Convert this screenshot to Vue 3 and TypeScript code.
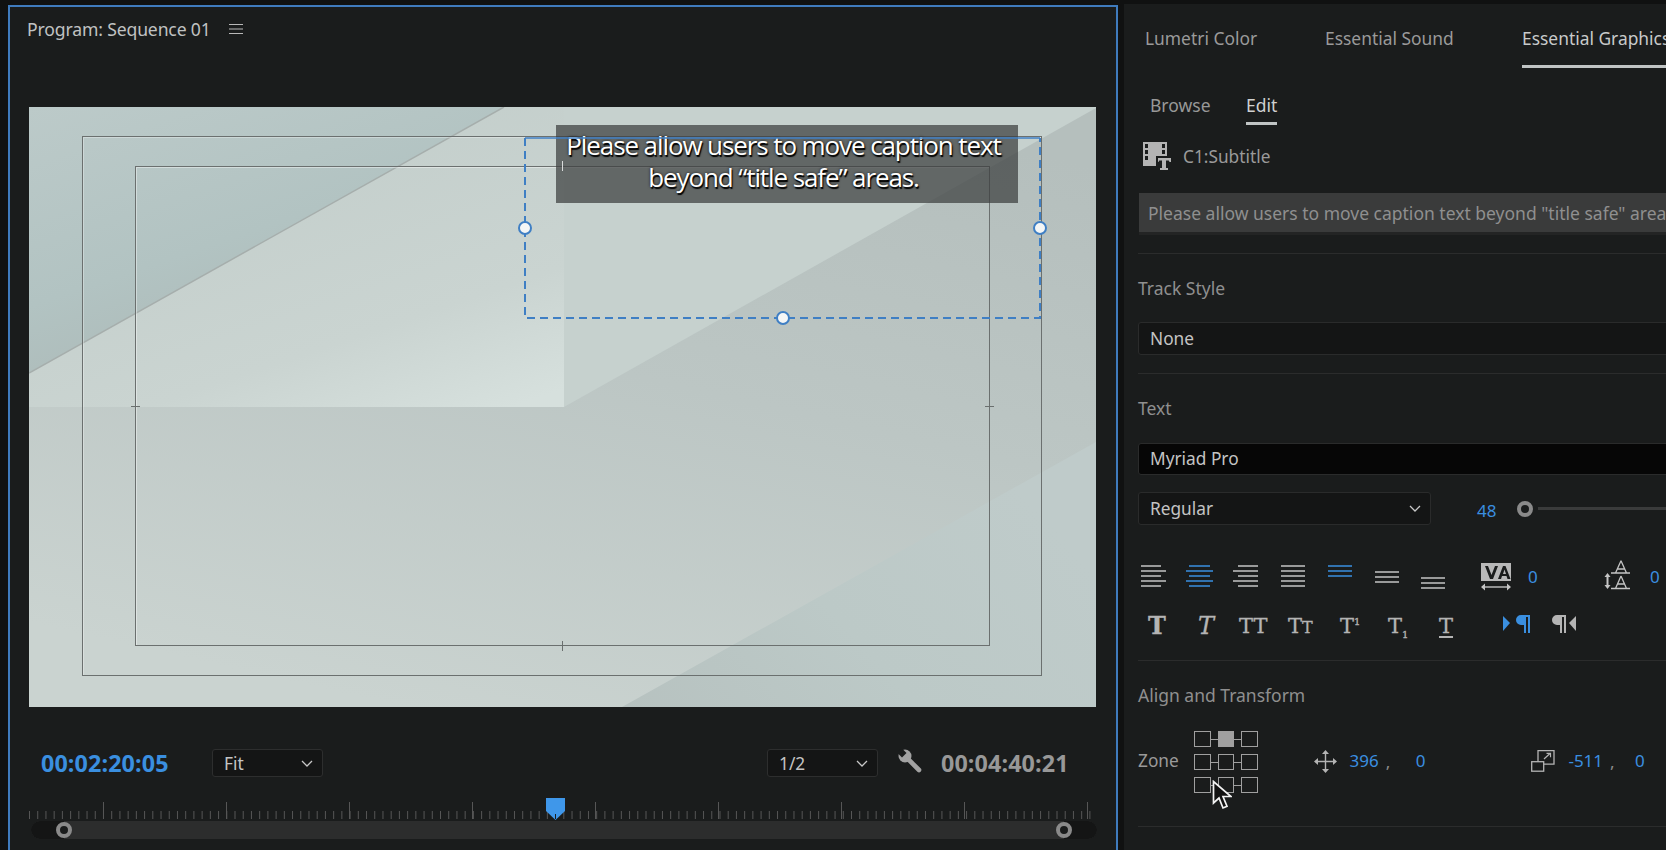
<script setup lang="ts">
const smallTicks = Array.from({ length: 130 }, (_, i) => 29 + i * 8.22);
const majorTicks = [103, 226, 349, 472, 595, 718, 841, 964, 1087];
const zoneRows = [0, 1, 2];
const zoneCols = [0, 1, 2];
</script>

<template>
  <div class="app">
    <section class="program">
      <header class="program-head">
        <span class="program-title">Program: Sequence 01</span>
        <svg class="menu" width="14" height="12" viewBox="0 0 14 12">
          <path d="M0 1.500h14M0 6h14M0 10.500h14" stroke="#b8b8b8" stroke-width="1.200" />
        </svg>
      </header>

      <div class="video">
        <svg class="video-bg" width="1067" height="600" viewBox="0 0 1067 600" preserveAspectRatio="none">
          <defs>
            <linearGradient id="darkface" x1="0" y1="0" x2="0.6" y2="1">
              <stop offset="0" stop-color="#bccac9" />
              <stop offset="0.55" stop-color="#b2c3c2" />
              <stop offset="1" stop-color="#abb7b5" />
            </linearGradient>
            <linearGradient id="lightface" x1="0.3" y1="0" x2="0.9" y2="1">
              <stop offset="0" stop-color="#c2cdca" />
              <stop offset="0.7" stop-color="#cad4d1" />
              <stop offset="1" stop-color="#d6e0dd" />
            </linearGradient>
            <linearGradient id="floor" x1="0.75" y1="0" x2="0.35" y2="1">
              <stop offset="0" stop-color="#b5bfbd" />
              <stop offset="0.45" stop-color="#bcc6c4" />
              <stop offset="1" stop-color="#cad3d0" />
            </linearGradient>
            <linearGradient id="band" x1="0" y1="1" x2="1" y2="0.5">
              <stop offset="0" stop-color="#b7c2c0" />
              <stop offset="0.5" stop-color="#bcc9c7" />
              <stop offset="1" stop-color="#bfcbca" />
            </linearGradient>
          </defs>
          <rect width="1067" height="600" fill="url(#floor)" />
          <polygon points="535,0 1067,0 1067,1 535,300" fill="#c6d1ce" />
          <polygon points="0,0 475,0 0,266" fill="url(#darkface)" />
          <polygon points="475,0 535,0 535,300 0,300 0,266" fill="url(#lightface)" />
          <polygon points="1067,335 1067,600 593,600" fill="url(#band)" />
          <path d="M0 266 475 0" stroke="#a6aeac" stroke-width="1.500" fill="none" />
        </svg>

        <div class="safe safe-outer"></div>
        <div class="safe safe-inner"></div>
        <i class="cross cross-l"></i>
        <i class="cross cross-r"></i>
        <i class="cross cross-b"></i>
        <i class="cross cross-t"></i>

        <div class="caption">
          <p>Please allow users to move caption text</p>
          <p>beyond “title safe” areas.</p>
        </div>
        <svg class="select-box" width="520" height="184" viewBox="0 0 520 184">
          <path d="M1 1H516" stroke="#3f7fc4" stroke-width="1.500" fill="none" />
          <path d="M1 1V181H516V1" stroke="#3f7fc4" stroke-width="2" stroke-dasharray="8 5" fill="none" />
        </svg>
        <i class="handle handle-l"></i>
        <i class="handle handle-r"></i>
        <i class="handle handle-b"></i>
      </div>

      <div class="controls">
        <span class="tc tc-now">00:02:20:05</span>
        <div class="dd dd-fit"><span>Fit</span>
          <svg width="12" height="7" viewBox="0 0 12 7"><path d="M1 1l5 5 5-5" fill="none" stroke="#c8c8c8" stroke-width="1.300" /></svg>
        </div>
        <div class="dd dd-res"><span>1/2</span>
          <svg width="12" height="7" viewBox="0 0 12 7"><path d="M1 1l5 5 5-5" fill="none" stroke="#c8c8c8" stroke-width="1.300" /></svg>
        </div>
        <svg class="wrench" width="24" height="24" viewBox="0 0 24 24">
          <circle cx="7" cy="7" r="6.500" fill="#a2a2a2" />
          <path d="M8 8L21 21" stroke="#a2a2a2" stroke-width="4.600" stroke-linecap="round" />
          <polygon points="-1,3.500 3.500,-1 8.500,4 4,8.500" fill="#1a1c1c" />
        </svg>
        <span class="tc tc-end">00:04:40:21</span>
      </div>

      <div class="timeline">
        <svg class="ruler" width="1106" height="22" viewBox="10 0 1106 22">
          <rect v-for="t in smallTicks" :key="t" :x="t" y="13" width="1" height="8" fill="#565656" />
          <rect v-for="t in majorTicks" :key="'m' + t" :x="t" y="4" width="1" height="17" fill="#565656" />
          <path d="M546 0h19v13l-9.500 9-9.500-9z" fill="#3f97ea" />
          <path d="M555 21v-5h1v5z" fill="#1a1c1c" />
        </svg>
        <div class="scroll">
          <i class="scroll-end"></i>
          <i class="scroll-knob"></i>
          <i class="scroll-mid"></i>
          <i class="scroll-knob"></i>
          <i class="scroll-end"></i>
        </div>
      </div>
    </section>

    <aside class="panel">
      <nav class="tabs">
        <span class="tab">Lumetri Color</span>
        <span class="tab">Essential Sound</span>
        <span class="tab tab-on">Essential Graphics</span>
      </nav>
      <nav class="subtabs">
        <span class="subtab">Browse</span>
        <span class="subtab subtab-on">Edit</span>
      </nav>
      <div class="track">
        <svg width="29" height="29" viewBox="0 0 29 29">
          <path d="M0 0h24v20H16v4H0z" fill="#b4b4b4" />
          <g fill="#1a1c1c">
            <rect x="2" y="2" width="3" height="4" /><rect x="2" y="8" width="3" height="4" /><rect x="2" y="14" width="3" height="4" />
            <rect x="19" y="2" width="3" height="4" /><rect x="19" y="8" width="3" height="4" />
            <rect x="13" y="14" width="16" height="15" />
          </g>
          <path d="M15 16h13v4h-1.500l-.7-1.500H23V26h2v2h-8v-2h2v-7.500h-2.800L15.500 20H15z" fill="#b4b4b4" />
        </svg>
        <span>C1:Subtitle</span>
      </div>
      <div class="caption-input">Please allow users to move caption text beyond "title safe" areas.</div>
      <hr class="rule rule-a" />
      <div class="heading h-track">Track Style</div>
      <div class="field field-none">None</div>
      <hr class="rule rule-b" />
      <div class="heading h-text">Text</div>
      <div class="field field-font">Myriad Pro</div>
      <div class="style-row">
        <div class="field field-style"><span>Regular</span>
          <svg width="12" height="7" viewBox="0 0 12 7"><path d="M1 1l5 5 5-5" fill="none" stroke="#c8c8c8" stroke-width="1.300" /></svg>
        </div>
        <span class="num size">48</span>
        <i class="knob"></i>
        <i class="slide"></i>
      </div>

      <div class="icons-a">
        <svg width="25" height="24" viewBox="0 0 25 24"><path d="M0 1h20M0 6h25M0 11h20M0 16h25M0 21h20" stroke="#c4c4c4" stroke-width="1.400" /></svg>
        <svg width="27" height="24" viewBox="0 0 27 24"><path d="M3 1h21M0 6h27M3 11h21M0 16h27M3 21h21" stroke="#3a8fe0" stroke-width="1.400" /></svg>
        <svg width="25" height="24" viewBox="0 0 25 24"><path d="M5 1h20M0 6h25M5 11h20M0 16h25M5 21h20" stroke="#c4c4c4" stroke-width="1.400" /></svg>
        <svg width="24" height="24" viewBox="0 0 24 24"><path d="M0 1h24M0 6h24M0 11h24M0 16h24M0 21h24" stroke="#c4c4c4" stroke-width="1.400" /></svg>
        <svg width="24" height="24" viewBox="0 0 24 24"><path d="M0 1h24M0 6h24M0 11h24" stroke="#3a8fe0" stroke-width="1.400" /></svg>
        <svg width="24" height="24" viewBox="0 0 24 24"><path d="M0 7h24M0 12h24M0 17h24" stroke="#c4c4c4" stroke-width="1.400" /></svg>
        <svg width="24" height="24" viewBox="0 0 24 24"><path d="M0 13h24M0 18h24M0 23h24" stroke="#c4c4c4" stroke-width="1.400" /></svg>
        <svg class="i-va" width="30" height="29" viewBox="0 0 30 29">
          <rect width="30" height="18" fill="#b8b8b8" />
          <path d="M4 3h3l3.500 9L14 3h3l-5 13H9zM17 16l5-13h2.500l5 13h-3l-1-3h-4.500l-1 3zM22 11h3l-1.500-4.500z" fill="#1a1c1c" />
          <path d="M3 24h24" stroke="#c4c4c4" stroke-width="1.400" />
          <path d="M0 24l4-3.500v7zM30 24l-4-3.500v7z" fill="#c4c4c4" />
        </svg>
        <span class="num n-va">0</span>
        <svg class="i-lead" width="26" height="30" viewBox="0 0 26 30">
          <path d="M7 13h19M7 28.500h19M17 .8L11.500 13M17 .8L22.500 13M13.500 9h7M17 16L11.500 28.500M17 16l5.500 12.500M13.500 24h7" fill="none" stroke="#c4c4c4" stroke-width="1.300" />
          <path d="M3.500 13l3 4H4.500v8h2l-3 4-3-4h2v-8h-2z" fill="#c4c4c4" />
        </svg>
        <span class="num n-lead">0</span>
      </div>

      <div class="icons-b">
        <span class="t t-bold">T</span>
        <span class="t t-ital">T</span>
        <span class="t t-caps">TT</span>
        <span class="t t-small">T<small>T</small></span>
        <span class="t t-sup">T<sup>1</sup></span>
        <span class="t t-sub">T<sub>1</sub></span>
        <span class="t t-und">T</span>
        <svg class="para p-ltr" width="27" height="20" viewBox="0 0 27 20">
          <path d="M0 2l7 7-7 8z" fill="#3a8fe0" />
          <path d="M18 1h9v18h-2V3h-2v16h-2v-8h-3a5 5 0 0 1 0-10z" fill="#3a8fe0" />
        </svg>
        <svg class="para p-rtl" width="27" height="20" viewBox="0 0 27 20">
          <path d="M8 1h9v18h-2V3h-2v16h-2v-8H8a5 5 0 0 1 0-10z" fill="#b4b4b4" />
          <path d="M27 2l-7 7 7 8z" fill="#b4b4b4" />
        </svg>
      </div>
      <hr class="rule rule-c" />
      <div class="heading h-align">Align and Transform</div>
      <div class="zone-row">
        <span class="zone-label">Zone</span>
        <div class="zone">
          <div v-for="r in zoneRows" :key="r" class="zone-line">
            <i v-for="c in zoneCols" :key="c" class="cell" :class="{ 'cell-on': r === 0 && c === 1 }"></i>
          </div>
          <svg class="cursor" width="20" height="30" viewBox="0 0 20 30">
            <path d="M1.500 1.500V23l5.500-5 4 10 4-1.700-4-9.800H19z" fill="#111" stroke="#f2f2f2" stroke-width="1.700" stroke-linejoin="miter" />
          </svg>
        </div>
        <svg class="i-move" width="23" height="23" viewBox="0 0 23 23">
          <path d="M11.500 3v17M3 11.500h17" stroke="#b4b4b4" stroke-width="1.400" />
          <path d="M11.500 0l3.500 4H8zM11.500 23L8 19h7zM0 11.500L4 8v7zM23 11.500L19 15V8z" fill="#b4b4b4" />
        </svg>
        <span class="num n-x1">396</span><span class="comma">,</span><span class="num n-y1">0</span>
        <svg class="i-scale" width="24" height="22" viewBox="0 0 24 22">
          <rect x=".7" y="11.700" width="12" height="9.500" fill="none" stroke="#b4b4b4" stroke-width="1.300" />
          <path d="M7 11.700V.7h16v13.500H12.700" fill="none" stroke="#b4b4b4" stroke-width="1.300" />
          <path d="M13 9l6-5.500M15.500 3.300h4v4" fill="none" stroke="#b4b4b4" stroke-width="1.200" />
        </svg>
        <span class="num n-x2">-511</span><span class="comma comma-b">,</span><span class="num n-y2">0</span>
      </div>
      <hr class="rule rule-d" />
    </aside>
  </div>
</template>

<style>
html, body { margin: 0; background: #0f1010; overflow: hidden; }
</style>

<style scoped>
.app {
  width: 1666px;
  height: 850px;
  display: flex;
  overflow: hidden;
  background: #101111;
  font-family: "Noto Sans", "Open Sans", sans-serif;
  color: #a8a8a8;
}
.program {
  width: 1110px;
  height: 860px;
  margin: 5px 0 0 8px;
  border: 2px solid #3f7bbd;
  box-sizing: border-box;
  background: #1a1c1c;
  flex: none;
  display: flex;
  flex-direction: column;
}
.program-head {
  height: 100px;
  box-sizing: border-box;
  padding: 10px 0 0 17px;
  display: flex;
  align-items: flex-start;
  gap: 18px;
}
.program-title { font-size: 17.600px; line-height: 24px; color: #c0c2c2; letter-spacing: -0.15px; }
.menu { margin-top: 6px; }

.video {
  position: relative;
  width: 1067px;
  height: 600px;
  margin-left: 19px;
  flex: none;
}
.video-bg { position: absolute; inset: 0; display: block; }
.safe { position: absolute; box-sizing: border-box; border: 1px solid #6b706f; }
.safe-outer { left: 53px; top: 29px; width: 960px; height: 540px; box-shadow: inset 1px 1px 0 rgba(255,255,255,.3); }
.safe-inner { left: 106px; top: 59px; width: 855px; height: 480px; box-shadow: inset 1px 1px 0 rgba(255,255,255,.4); }
.cross { position: absolute; background: #6a6f6e; }
.cross-l { left: 102px; top: 299px; width: 9px; height: 1px; }
.cross-r { left: 956px; top: 299px; width: 9px; height: 1px; }
.cross-b { left: 533px; top: 534px; width: 1px; height: 10px; }
.cross-t { left: 533px; top: 54px; width: 1px; height: 10px; z-index: 2; background: #d8dada; }

.caption {
  position: absolute;
  left: 527px;
  top: 18px;
  width: 462px;
  height: 78px;
  background: rgba(60, 62, 62, .72);
  box-sizing: border-box;
  padding: 4px 7px 0 0;
  text-align: center;
  color: #fff;
  font-family: "Open Sans", sans-serif;
  font-size: 26px;
  line-height: 32px;
  letter-spacing: -1.100px;
  text-shadow: 1px 2px 1px #000, 0 0 3px rgba(0,0,0,.75);
}
.caption p { margin: 0; white-space: nowrap; }
.select-box { position: absolute; left: 495px; top: 30px; display: block; overflow: visible; }
.handle {
  position: absolute;
  width: 14px;
  height: 14px;
  box-sizing: border-box;
  border: 2px solid #3f7fc4;
  border-radius: 50%;
  background: #f4f6f6;
}
.handle-l { left: 489px; top: 114px; }
.handle-r { left: 1004px; top: 114px; }
.handle-b { left: 747px; top: 204px; }

.controls {
  height: 95px;
  box-sizing: border-box;
  padding: 42px 0 0 31px;
  display: flex;
  align-items: flex-start;
}
.tc { font-size: 23.300px; line-height: 28px; font-weight: 700; font-family: "Open Sans", sans-serif; letter-spacing: .1px; }
.tc-now { color: #3a8fe0; width: 171px; flex: none; }
.tc-end { color: #989898; margin-left: 19px; margin-top: 0; }
.dd {
  height: 28px;
  box-sizing: border-box;
  background: #141515;
  border: 1px solid #2d2e2e;
  border-radius: 3px;
  display: flex;
  align-items: center;
  justify-content: space-between;
  padding: 0 9px 0 11px;
  font-size: 17.300px;
  color: #c4c4c4;
  flex: none;
}
.dd-fit { width: 111px; }
.dd-res { width: 111px; margin-left: 444px; }
.wrench { margin: 0 0 0 20px; flex: none; }

.timeline { display: flex; flex-direction: column; }
.ruler { display: block; margin-top: -4px; }
.scroll {
  margin: 1px 0 0 21px;
  width: 1066px;
  height: 18px;
  display: flex;
  align-items: center;
  background: #2c2d2d;
  border-radius: 9px;
}
.scroll-end { width: 33px; height: 18px; background: #141515; border-radius: 9px 0 0 9px; flex: none; }
.scroll-end:last-child { border-radius: 0 9px 9px 0; }
.scroll-mid { flex: 1; }
.scroll-knob {
  width: 16px;
  height: 16px;
  box-sizing: border-box;
  border: 4px solid #8a8a8a;
  border-radius: 50%;
  background: #1a1c1c;
  flex: none;
  margin: 0 -8px;
  position: relative;
}

.panel {
  flex: 1;
  min-width: 0;
  position: relative;
  margin: 4px 0 0 6px;
  padding-left: 13px;
  box-sizing: border-box;
  overflow: hidden;
  display: flex;
  flex-direction: column;
  background: #1a1c1c;
}
.tabs { display: flex; height: 64px; flex: none; }
.tab { font-size: 17.400px; padding-top: 21px; line-height: 26px; color: #9a9a9a; box-sizing: border-box; white-space: nowrap; flex: none; }
.tab:nth-child(1) { margin-left: 8px; width: 180px; }
.tab:nth-child(2) { width: 197px; }
.tab-on { color: #c8caca; flex: 1; border-bottom: 3px solid #c0c4c4; }
.subtabs { display: flex; height: 57px; padding-left: 13px; box-sizing: border-box; flex: none; }
.subtab { font-size: 17.500px; line-height: 26px; padding-top: 24px; height: 57px; box-sizing: border-box; color: #989898; }
.subtab:first-child { width: 96px; }
.subtab-on { color: #cfd0d0; position: relative; }
.subtab-on::after { content: ""; position: absolute; left: 0; right: 0; top: 54px; height: 3px; background: #c0c4c4; }
.track { display: flex; align-items: center; height: 36px; margin-top: 13px; gap: 11px; padding-left: 6px; flex: none; font-size: 17.300px; color: #9a9a9a; }
.caption-input {
  margin: 19px 0 0 2px;
  height: 39px;
  background: #3a3b3b;
  color: #8f8f8f;
  font-size: 17.500px;
  line-height: 41px;
  padding-left: 9px;
  white-space: nowrap;
  flex: none;
  width: 560px;
  box-shadow: 0 3px 0 #232424;
}
.rule { margin: 0 0 0 1px; border: 0; height: 1px; background: #2b2c2c; flex: none; width: 540px; }
.rule-a { margin-top: 21px; }
.heading { font-size: 17.500px; line-height: 24px; color: #8f8f8f; padding-left: 1px; flex: none; }
.h-track { margin-top: 22px; }
.field { margin-left: 1px; box-sizing: border-box; font-size: 17.300px; color: #c4c4c4; border: 1px solid #2a2b2b; border-radius: 3px; flex: none; padding-left: 11px; }
.field-none { margin-top: 22px; width: 540px; height: 33px; line-height: 32px; background: #141515; }
.rule-b { margin-top: 18px; }
.h-text { margin-top: 22px; }
.field-font { margin-top: 23px; width: 540px; height: 32px; line-height: 29px; background: #060606; }
.style-row { display: flex; align-items: center; margin-top: 17px; height: 33px; flex: none; position: relative; }
.field-style { width: 293px; height: 33px; background: #141515; display: flex; align-items: center; justify-content: space-between; padding-right: 9px; }
.num { color: #3a8fe0; font-size: 17px; line-height: 22px; flex: none; }
.size { margin-left: 46px; margin-top: 4px; }
.knob { width: 16px; height: 16px; box-sizing: border-box; border: 4px solid #8a8a8a; border-radius: 50%; margin-left: 21px; flex: none; }
.slide { width: 200px; height: 3px; background: #3a3b3b; margin-left: 5px; flex: none; }

.icons-a { position: relative; height: 30px; margin-top: 35px; flex: none; }
.icons-a > * { position: absolute; top: 5px; }
.icons-a > :nth-child(1) { left: 4px; }
.icons-a > :nth-child(2) { left: 49px; }
.icons-a > :nth-child(3) { left: 96px; }
.icons-a > :nth-child(4) { left: 144px; }
.icons-a > :nth-child(5) { left: 191px; }
.icons-a > :nth-child(6) { left: 238px; }
.icons-a > :nth-child(7) { left: 284px; }
.icons-a .i-va { left: 344px; top: 3px; }
.icons-a .n-va { left: 391px; top: 6px; }
.icons-a .i-lead { left: 467px; top: 0; }
.icons-a .n-lead { left: 513px; top: 6px; }

.icons-b { position: relative; height: 30px; margin-top: 21px; flex: none; color: #b4b4b4; }
.t { position: absolute; top: 0; font-size: 24px; line-height: 30px; font-family: "DejaVu Serif", "Liberation Serif", serif; -webkit-text-stroke: .3px #b4b4b4; }
.t sup, .t sub { font-size: 10px; line-height: 0; }
.t small { font-size: 16px; }
.t-bold { left: 11px; font-weight: 700; font-size: 24px; }
.t-ital { left: 61px; font-style: italic; font-size: 24px; }
.t-caps { left: 102px; font-size: 21px; }
.t-small { left: 151px; font-size: 21px; }
.t-sup { left: 203px; font-size: 21px; }
.t-sub { left: 251px; font-size: 21px; }
.t-und { left: 302px; font-size: 21px; text-decoration: underline; text-underline-offset: 3px; text-decoration-thickness: 1.500px; }
.para { position: absolute; top: 3px; }
.p-ltr { left: 366px; }
.p-rtl { left: 412px; }
.rule-c { margin-top: 19px; }
.h-align { margin-top: 22px; }
.zone-row { position: relative; height: 66px; margin-top: 21px; flex: none; display: flex; align-items: center; }
.zone-label { font-size: 17.300px; color: #9a9a9a; margin: 0 0 2px 1px; width: 56px; flex: none; }
.zone { position: relative; display: flex; flex-direction: column; gap: 7px; flex: none; margin-top: 2px; }
.zone-line { display: flex; gap: 7px; position: relative; }
.zone-line::before { content: ""; position: absolute; left: 0; right: 0; top: 8px; height: 1px; background: #a0a0a0; }
.cell { width: 16.500px; height: 16px; box-sizing: border-box; border: 1px solid #a0a0a0; background: #1a1c1c; position: relative; }
.cell-on { background: #a0a0a0; }
.cursor { position: absolute; left: 18px; top: 49px; }
.i-move { margin-left: 56px; flex: none; }
.n-x1 { margin-left: 13px; }
.comma { color: #8a8a8a; font-size: 17px; margin-left: 7px; width: 30px; flex: none; }
.comma-b { width: 25px; }
.i-scale { margin-left: 106px; flex: none; }
.n-x2 { margin-left: 13px; }
.rule-d { margin-top: 32px; }
</style>
